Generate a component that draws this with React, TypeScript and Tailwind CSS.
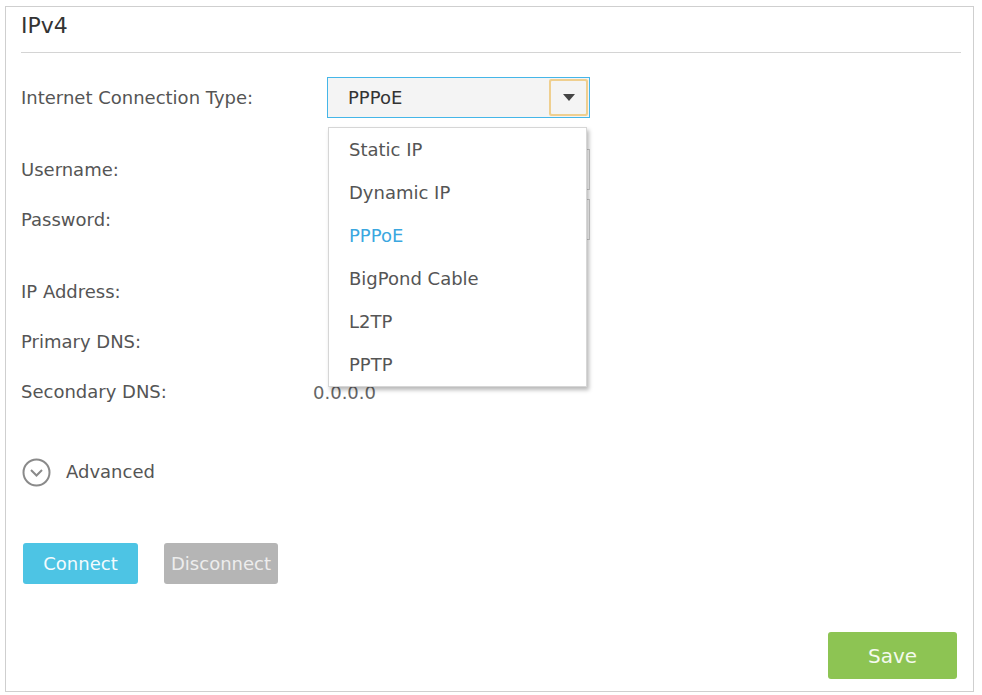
import React from "react";

const options = ["Static IP", "Dynamic IP", "PPPoE", "BigPond Cable", "L2TP", "PPTP"];

function Label({ children, w = "w-[306px]" }: { children: React.ReactNode; w?: string }) {
  return <div className={`${w} shrink-0 text-[#555]`}>{children}</div>;
}

export default function App() {
  return (
    <div className="w-[982px] h-[695px] bg-white pt-[6px] pl-[5px] font-['DejaVu_Sans',sans-serif] text-[18px] leading-none">
      <div className="w-[969px] h-[686px] border border-[#cfcfcf] pl-[15px] pr-[12px]">
        {/* section heading */}
        <div className="pt-[5px] pb-[12px] border-b border-[#d4d4d4]">
          <div className="h-[28px] flex items-center text-[22px] text-[#333]">IPv4</div>
        </div>

        {/* connection type */}
        <div className="mt-[24px] h-[41px] flex items-center">
          <Label>Internet Connection Type:</Label>
          <div className="relative z-10">
            <div className="w-[263px] h-[41px] bg-[#45b6e8] p-px">
              <div className="w-full h-full bg-[#f4f4f4] flex items-center pl-[20px] pr-px text-[#333]">
                <span className="flex-1">PPPoE</span>
                <div className="w-[39px] h-[37px] rounded-[2px] bg-[#efcf8f] p-[2px]">
                  <div className="w-full h-full rounded-[1px] bg-[#f4f4f4] flex items-center justify-center">
                    <svg width="12" height="8" viewBox="0 0 12 8">
                      <polygon points="0,0 12,0 6,7" fill="#444" />
                    </svg>
                  </div>
                </div>
              </div>
            </div>
            <div className="absolute left-[1px] top-[50px] w-[259px] bg-white border border-[#d6d6d6] shadow-[2px_3px_4px_rgba(0,0,0,0.28)]">
              {options.map((o) => (
                <div
                  key={o}
                  className={`h-[43px] flex items-center pl-[20px] ${o === "PPPoE" ? "text-[#3ba7df]" : "text-[#555]"}`}
                >
                  {o}
                </div>
              ))}
            </div>
          </div>
        </div>

        {/* account */}
        <div className="mt-[31px] h-[41px] flex items-center">
          <Label w="w-[308px]">Username:</Label>
          <div className="w-[261px] h-[41px] border border-[#cccccc] bg-white" />
        </div>
        <div className="mt-[9px] h-[41px] flex items-center">
          <Label w="w-[308px]">Password:</Label>
          <div className="w-[261px] h-[41px] border border-[#cccccc] bg-white" />
        </div>

        {/* addresses */}
        <div className="mt-[31px] h-[41px] flex items-center">
          <Label w="w-[292px]">IP Address:</Label>
        </div>
        <div className="mt-[9px] h-[41px] flex items-center">
          <Label w="w-[292px]">Primary DNS:</Label>
        </div>
        <div className="mt-[9px] h-[41px] flex items-center">
          <Label w="w-[292px]">Secondary DNS:</Label>
          <span className="text-[#666] pt-[2px]">0.0.0.0</span>
        </div>

        {/* advanced toggle */}
        <div className="mt-[46px] h-[28px] flex items-center gap-[15px] pl-[1px]">
          <svg width="29" height="29" viewBox="0 0 29 29">
            <circle cx="14.5" cy="14.5" r="13" fill="none" stroke="#8a8a8a" strokeWidth="2" />
            <polyline points="9,12 14.5,17.5 20,12" fill="none" stroke="#8a8a8a" strokeWidth="2" />
          </svg>
          <span className="text-[#555]">Advanced</span>
        </div>

        {/* connection actions */}
        <div className="mt-[57px] flex gap-[26px] pl-[2px]">
          <button className="w-[115px] h-[41px] rounded-[3px] bg-[#4dc4e4] text-[#f3fbfe]">Connect</button>
          <button className="w-[114px] h-[41px] rounded-[3px] bg-[#b5b5b5] text-[#ededed]">Disconnect</button>
        </div>

        <div className="mt-[48px] flex justify-end pr-[4px]">
          <button className="w-[129px] h-[47px] rounded-[3px] bg-[#8dc453] text-[20px] text-[#f4faee]">Save</button>
        </div>
      </div>
    </div>
  );
}
